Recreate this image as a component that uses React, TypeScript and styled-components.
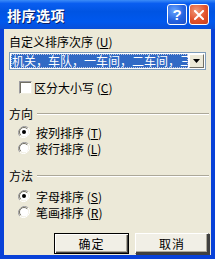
import React from 'react';
import styled, { createGlobalStyle } from 'styled-components';

const GlobalStyle = createGlobalStyle`
  html, body {
    margin: 0;
    padding: 0;
    background: #ffffff;
  }
  * {
    box-sizing: border-box;
  }
`;

const FONT = `"Noto Sans CJK SC", "Liberation Sans", sans-serif`;

const Window = styled.div`
  width: 215px;
  height: 259px;
  display: flex;
  flex-direction: column;
  background: #0841d8;
  font-family: ${FONT};
  font-size: 12px;
  color: #000;
  overflow: hidden;
`;

const TitleBar = styled.div`
  height: 29px;
  display: flex;
  align-items: center;
  padding: 0 6px 0 7px;
  background: linear-gradient(
    to bottom,
    #3c8cf8 0%,
    #0a5ef0 12%,
    #0054e3 40%,
    #0058ee 75%,
    #0a4fd8 100%
  );
`;

const Title = styled.div`
  flex: 1;
  color: #fff;
  font-weight: bold;
  font-size: 14px;
  letter-spacing: 0.5px;
  text-shadow: 1px 1px 0 #0a1f68;
`;

const CaptionButton = styled.div<{ $close?: boolean }>`
  width: 20px;
  height: 21px;
  margin-left: 2px;
  border: 1px solid #fff;
  border-radius: 3px;
  display: flex;
  align-items: center;
  justify-content: center;
  color: #fff;
  font-family: "Liberation Sans", sans-serif;
  font-weight: bold;
  font-size: 15px;
  background: ${(p) =>
    p.$close
      ? 'radial-gradient(circle at 35% 30%, #f09a7a 0%, #e2522c 55%, #c8401c 100%)'
      : 'radial-gradient(circle at 35% 30%, #6aa6ff 0%, #2663e0 55%, #1a4fc8 100%)'};
`;

const Body = styled.div`
  flex: 1;
  margin: 0 4px 4px 4px;
  background: #ece9d8;
  padding: 6px 5px 0 5px;
  display: flex;
  flex-direction: column;
`;

const Label = styled.div<{ $mt?: number }>`
  height: 14px;
  line-height: 14px;
  margin-top: ${(p) => p.$mt ?? 0}px;
  white-space: nowrap;
`;

const Combo = styled.div`
  margin-top: 3px;
  height: 18px;
  border: 1px solid #7f9db9;
  background: #fff;
  padding: 1px;
  display: flex;
`;

const ComboText = styled.div`
  flex: 1;
  background: #316ac5;
  color: #fff;
  line-height: 14px;
  padding-left: 1px;
  white-space: nowrap;
  overflow: hidden;
  outline: 1px dotted #c0c8e0;
  outline-offset: -1px;
`;

const ComboButton = styled.div`
  width: 15px;
  margin-left: 1px;
  background: #ece9d8;
  border-top: 1px solid #fff;
  border-left: 1px solid #fff;
  border-right: 1px solid #716f64;
  border-bottom: 1px solid #716f64;
  display: flex;
  align-items: center;
  justify-content: center;
`;

const Option = styled.div<{ $mt: number; $pl: number; $gap: number }>`
  height: 14px;
  margin-top: ${(p) => p.$mt}px;
  padding-left: ${(p) => p.$pl}px;
  display: flex;
  align-items: center;
  gap: ${(p) => p.$gap}px;
  white-space: nowrap;
`;

const CheckBox = styled.div`
  width: 13px;
  height: 13px;
  background: #fff;
  border-top: 1px solid #9d9da1;
  border-left: 1px solid #9d9da1;
  border-right: 1px solid #f1efe2;
  border-bottom: 1px solid #f1efe2;
  box-shadow: inset 1px 1px 0 #716f64;
`;

const GroupHeader = styled.div<{ $mt: number }>`
  height: 14px;
  margin-top: ${(p) => p.$mt}px;
  display: flex;
  align-items: center;
  gap: 4px;
  margin-right: -3px;
`;

const GroupLine = styled.div`
  flex: 1;
  height: 2px;
  margin-top: 2px;
  border-top: 1px solid #aca899;
  border-bottom: 1px solid #fff;
`;

const ButtonRow = styled.div`
  margin-top: 14px;
  margin-right: -3px;
  display: flex;
  justify-content: flex-end;
  gap: 6px;
`;

const Button = styled.div<{ $default?: boolean }>`
  width: ${(p) => (p.$default ? 75 : 74)}px;
  height: 21px;
  display: flex;
  align-items: center;
  justify-content: center;
  background: #f1efe6;
  border: 1px solid ${(p) => (p.$default ? '#000' : '#fff')};
  box-shadow: ${(p) =>
    p.$default
      ? 'inset 1px 1px 0 #fff, inset -1px -1px 0 #404040, inset -2px -2px 0 #aca899'
      : 'inset -1px -1px 0 #404040, inset -2px -2px 0 #aca899, 1px 1px 0 #404040'};
  border-right-color: ${(p) => (p.$default ? '#000' : '#404040')};
  border-bottom-color: ${(p) => (p.$default ? '#000' : '#404040')};
  letter-spacing: 1px;
`;

const Radio = ({ checked }: { checked?: boolean }) => (
  <svg width="12" height="12" viewBox="0 0 12 12">
    <path d="M10.2 1.8A6 6 0 0 0 1.8 10.2" fill="none" stroke="#9d9da1" strokeWidth="1" />
    <path d="M1.8 10.2A6 6 0 0 0 10.2 1.8" fill="none" stroke="#fff" strokeWidth="1" />
    <circle cx="6" cy="6" r="4.5" fill="#fff" />
    <path d="M9.2 2.8A4.5 4.5 0 0 0 2.8 9.2" fill="none" stroke="#716f64" strokeWidth="1" />
    {checked && <circle cx="6" cy="6" r="2" fill="#000" />}
  </svg>
);

const App = () => {
  return (
    <>
      <GlobalStyle />
      <Window>
        <TitleBar>
          <Title>排序选项</Title>
          <CaptionButton>?</CaptionButton>
          <CaptionButton $close>
            <svg width="10" height="10" viewBox="0 0 10 10">
              <path d="M1 1L9 9M9 1L1 9" stroke="#fff" strokeWidth="2" strokeLinecap="square" />
            </svg>
          </CaptionButton>
        </TitleBar>
        <Body>
          <Label>自定义排序次序 (<u>U</u>)</Label>
          <Combo>
            <ComboText>机关，车队，一车间，二车间，三车间</ComboText>
            <ComboButton>
              <svg width="7" height="4" viewBox="0 0 7 4">
                <path d="M0 0H7L3.5 4Z" fill="#000" />
              </svg>
            </ComboButton>
          </Combo>
          <Option $mt={10} $pl={10} $gap={2}>
            <CheckBox />
            <span>区分大小写 (<u>C</u>)</span>
          </Option>
          <GroupHeader $mt={12}>
            <span>方向</span>
            <GroupLine />
          </GroupHeader>
          <Option $mt={5} $pl={9} $gap={6}>
            <Radio checked />
            <span>按列排序 (<u>T</u>)</span>
          </Option>
          <Option $mt={2} $pl={9} $gap={6}>
            <Radio />
            <span>按行排序 (<u>L</u>)</span>
          </Option>
          <GroupHeader $mt={13}>
            <span>方法</span>
            <GroupLine />
          </GroupHeader>
          <Option $mt={7} $pl={9} $gap={6}>
            <Radio checked />
            <span>字母排序 (<u>S</u>)</span>
          </Option>
          <Option $mt={2} $pl={9} $gap={6}>
            <Radio />
            <span>笔画排序 (<u>R</u>)</span>
          </Option>
          <ButtonRow>
            <Button $default>确定</Button>
            <Button>取消</Button>
          </ButtonRow>
        </Body>
      </Window>
    </>
  );
};

export default App;
